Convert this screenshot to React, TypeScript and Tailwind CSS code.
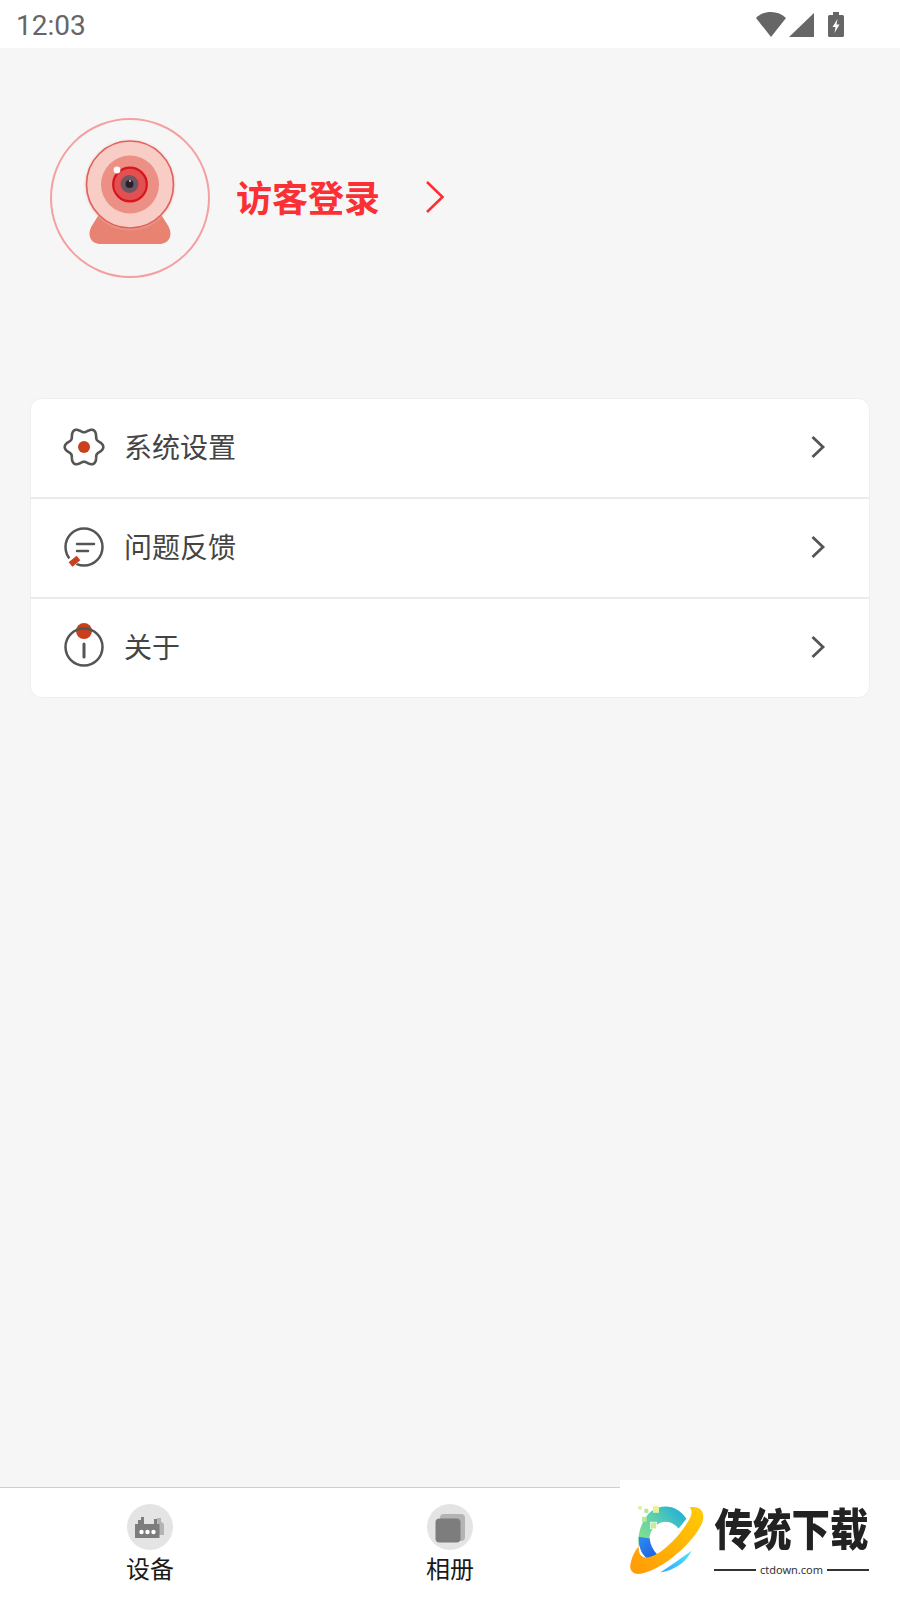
import React from "react";

const cjk = { fontFamily: '"Noto Sans CJK SC", "Noto Sans", sans-serif' };

function flowerPath(cx: number, cy: number) {
  const pts: string[] = [];
  for (let i = 0; i <= 180; i++) {
    const t = (i / 180) * Math.PI * 2;
    const r = 17 + 2.3 * Math.cos(6 * t);
    pts.push(`${(cx + r * Math.cos(t)).toFixed(2)} ${(cy + r * Math.sin(t)).toFixed(2)}`);
  }
  return "M" + pts.join("L") + "Z";
}

function GearIcon() {
  return (
    <svg width="44" height="44" viewBox="0 0 44 44" fill="none">
      <path d={flowerPath(22, 22)} stroke="#555" strokeWidth="2.6" strokeLinejoin="round" />
      <circle cx="22" cy="22" r="6" fill="#c9401c" />
    </svg>
  );
}

function CommentIcon() {
  return (
    <svg width="44" height="44" viewBox="0 0 44 44" fill="none">
      <circle cx="22" cy="22" r="18.5" stroke="#555" strokeWidth="2.5" />
      <path d="M15 19H32M15 26H26" stroke="#555" strokeWidth="2.5" strokeLinecap="round" />
      <path d="M16.5 31 L8 39" stroke="#fff" strokeWidth="9" />
      <path d="M16.5 33 L8.5 39.5" stroke="#c9401c" strokeWidth="6" />
    </svg>
  );
}

function InfoIcon() {
  return (
    <svg className="overflow-visible" width="44" height="44" viewBox="0 0 44 44" fill="none">
      <circle cx="22" cy="6" r="8" fill="#c9401c" />
      <circle cx="22" cy="22" r="18.5" stroke="#555" strokeWidth="2.5" />
      <path d="M22 19V32" stroke="#555" strokeWidth="3" strokeLinecap="round" />
    </svg>
  );
}

function Chevron() {
  return (
    <svg width="16" height="24" viewBox="0 0 16 24" fill="none">
      <path d="M2.5 2 L13 12 L2.5 22" stroke="#555" strokeWidth="2.8" />
    </svg>
  );
}

function Avatar() {
  return (
    <svg width="160" height="160" viewBox="20 18 160 160" fill="none">
      <defs>
        <filter id="soft" x="-20%" y="-20%" width="140%" height="140%">
          <feGaussianBlur stdDeviation="1.5" />
        </filter>
      </defs>
      <circle cx="100" cy="98" r="79" stroke="#f5a0a0" strokeWidth="2" />
      <path d="M68 116 L132 116 L137 124 C144 134 140 144 129 144 L71 144 C60 144 56 134 63 124 Z" fill="#e88271" />
      <circle cx="100" cy="85" r="44" fill="#e3b8ae" filter="url(#soft)" />
      <circle cx="100" cy="84.5" r="43.5" fill="#f7cdc5" stroke="#e2605c" strokeWidth="1.6" />
      <circle cx="100" cy="84.5" r="29" fill="#ec9085" />
      <circle cx="100" cy="84.5" r="16.8" fill="#e35052" stroke="#d8141c" strokeWidth="2.2" />
      <circle cx="99.5" cy="84" r="9" fill="#6d5763" />
      <circle cx="99.5" cy="84" r="4" fill="#2b2029" />
      <circle cx="100" cy="81" r="1" fill="#d9d0d4" />
      <circle cx="87" cy="70" r="3.4" fill="#ffffff" />
    </svg>
  );
}

function MenuRow({ icon, label, last }: { icon: React.ReactNode; label: string; last?: boolean }) {
  return (
    <div className={`flex items-center pb-[2px] pl-[31px] pr-[43px] ${last ? "h-[98px]" : "h-[100px] border-b-2 border-[#ebebeb]"}`}>
      <div className="flex h-11 w-11 items-center justify-center">{icon}</div>
      <span className="mb-[3px] ml-[18px] flex-1 text-[28px] leading-none text-[#444444]" style={cjk}>
        {label}
      </span>
      <Chevron />
    </div>
  );
}

function DeviceGlyph() {
  return (
    <svg width="46" height="46" viewBox="0 0 46 46">
      <circle cx="23" cy="23" r="23" fill="#e4e4e4" />
      <path d="M30 14 H34 V17.5 L37 20 V31 H31 Z" fill="#b4b4b4" />
      <path d="M14 13 H17 V20 H27 V15 H30 V20 H32.5 V34 H8 V20 H11 V16 H14 Z" fill="#7d7d7d" />
      <circle cx="14.5" cy="28" r="2.2" fill="#fff" />
      <circle cx="20.5" cy="28" r="2.2" fill="#fff" />
      <circle cx="26.5" cy="28" r="2.2" fill="#fff" />
    </svg>
  );
}

function AlbumGlyph() {
  return (
    <svg width="46" height="46" viewBox="0 0 46 46">
      <circle cx="23" cy="23" r="23" fill="#e4e4e4" />
      <rect x="13" y="10" width="25" height="27" rx="4" fill="#b4b4b4" />
      <rect x="8.5" y="14.5" width="25" height="24" rx="4" fill="#7d7d7d" />
    </svg>
  );
}

function NavItem({ icon, label }: { icon?: React.ReactNode; label?: string }) {
  return (
    <div className="flex flex-1 flex-col items-center pt-[16px]">
      {icon}
      <span className="mt-[3px] text-[24px] leading-[30px] text-[#1a1a1a]" style={cjk}>
        {label}
      </span>
    </div>
  );
}

function Logo() {
  return (
    <svg width="80" height="77" viewBox="50 90 240 230" fill="none">
      <defs>
        <linearGradient id="orange" x1="0" y1="1" x2="1" y2="0">
          <stop offset="0" stopColor="#ff9a08" />
          <stop offset="1" stopColor="#ffcb05" />
        </linearGradient>
        <linearGradient id="cee" x1="1" y1="0" x2="0" y2="0.8">
          <stop offset="0" stopColor="#12a8e0" />
          <stop offset="0.55" stopColor="#5ccfb0" />
          <stop offset="1" stopColor="#86e08a" />
        </linearGradient>
        <linearGradient id="deep" x1="0" y1="0" x2="1" y2="1">
          <stop offset="0" stopColor="#2f8df0" />
          <stop offset="1" stopColor="#1a56e0" />
        </linearGradient>
        <linearGradient id="sky" x1="1" y1="0" x2="0" y2="1">
          <stop offset="0" stopColor="#4fe6ff" />
          <stop offset="1" stopColor="#2ea6ff" />
        </linearGradient>
      </defs>
      <path d="M228 146 C205 108 160 98 125 122 C95 145 80 190 85 228 L120 225 C112 200 122 170 150 158 C170 150 190 158 205 175 Z" fill="url(#cee)" />
      <path d="M85 200 C85 235 95 262 125 272 L150 262 C130 245 120 225 118 205 Z" fill="url(#deep)" />
      <path d="M238 112 C268 106 286 124 276 156 C256 208 170 292 95 310 C68 316 54 300 62 275 C66 256 75 240 85 228 C84 250 92 263 108 262 C150 260 212 195 240 142 C246 128 244 118 238 112 Z" fill="url(#orange)" />
      <path d="M244 242 C228 276 190 302 150 307 C180 288 215 262 244 242 Z" fill="url(#sky)" />
      <rect x="84" y="108" width="10" height="10" fill="#d9ef9a" />
      <rect x="102" y="116" width="12" height="12" fill="#b6e68e" />
      <rect x="128" y="108" width="18" height="20" fill="#e6f29a" />
      <rect x="95" y="140" width="14" height="15" fill="#b8eb96" />
      <rect x="120" y="156" width="19" height="20" fill="#c4ee96" stroke="#fff" strokeWidth="2" />
    </svg>
  );
}

export default function App() {
  return (
    <div className="relative flex h-[1600px] w-[900px] flex-col overflow-hidden bg-[#f6f6f6]">
      <header className="flex h-12 items-center justify-between bg-white pl-4 pr-[54px]">
        <span className="pt-[3px] text-[28px] leading-none text-[#666666]" style={{ fontFamily: "Roboto, sans-serif" }}>
          12:03
        </span>
        <div className="flex items-center pt-[1px]">
          <svg width="90" height="28" viewBox="0 0 90 28">
            <path d="M0 7 C4 3 9 1 15 1 C21 1 26 3 30 7 L15 26 Z" fill="#666666" />
            <path d="M33 26 L58 2 V26 Z" fill="#666666" />
            <rect x="72" y="4" width="16" height="22" rx="1.5" fill="#666666" />
            <rect x="77" y="1" width="6" height="4" fill="#666666" />
            <path d="M81.5 8 L76.5 16 H79.5 L78.5 22 L83.5 13.5 H80.5 Z" fill="#fff" />
          </svg>
        </div>
      </header>

      <main className="flex-1 px-[30px]">
        <section className="mt-[70px] flex items-center pl-[20px]">
          <Avatar />
          <span className="mb-[4px] ml-[26px] text-[36px] font-bold leading-none text-[#fb3034]" style={cjk}>
            访客登录
          </span>
          <svg className="mb-[2px] ml-[44px]" width="22" height="34" viewBox="0 0 22 34" fill="none">
            <path d="M3 2 L18.5 17 L3 32" stroke="#fb3034" strokeWidth="2.6" />
          </svg>
        </section>

        <section className="mt-[120px] overflow-hidden rounded-xl border border-[#efefef] bg-white">
          <MenuRow icon={<GearIcon />} label="系统设置" />
          <MenuRow icon={<CommentIcon />} label="问题反馈" />
          <MenuRow icon={<InfoIcon />} label="关于" last />
        </section>
      </main>

      <nav className="flex h-[113px] border-t border-[#cfcfcf] bg-white">
        <NavItem icon={<DeviceGlyph />} label="设备" />
        <NavItem icon={<AlbumGlyph />} label="相册" />
        <NavItem />
      </nav>

      <div className="absolute bottom-0 right-0 flex h-[120px] w-[280px] items-start bg-white pl-[7px] pt-[20px]">
        <Logo />
        <div className="ml-[7px] flex w-[155px] flex-col items-center">
          <span className="origin-top scale-y-[1.16] whitespace-nowrap text-[38.5px] font-black leading-[46px] text-[#222222]" style={cjk}>
            传统下载
          </span>
          <div className="mt-[17px] flex w-full items-center">
            <div className="h-[2px] flex-1 bg-[#333333]" />
            <span className="mx-[4px] whitespace-nowrap text-[11px] leading-[14px] text-[#333333]" style={{ fontFamily: '"Noto Sans", sans-serif' }}>
              ctdown.com
            </span>
            <div className="h-[2px] flex-1 bg-[#333333]" />
          </div>
        </div>
      </div>
    </div>
  );
}
